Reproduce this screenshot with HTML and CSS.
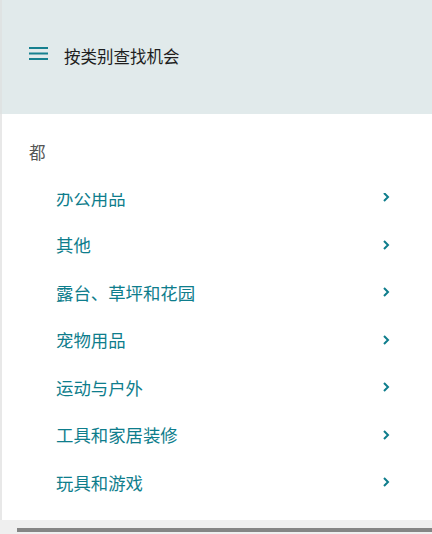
FILE: index.html
```html
<!DOCTYPE html>
<html lang="zh-CN">
<head>
<meta charset="utf-8">
<title>按类别查找机会</title>
<link rel="stylesheet" href="styles.css">
</head>
<body>
<div class="app">
  <header class="header">
    <button class="menu-btn" aria-label="菜单">
      <svg width="19" height="13" viewBox="0 0 19 13"><rect x="0" y="0" width="19" height="2" fill="#16808f"/><rect x="0" y="5.5" width="19" height="2" fill="#16808f"/><rect x="0" y="11" width="19" height="2" fill="#16808f"/></svg>
    </button>
    <h1 class="title">按类别查找机会</h1>
  </header>
  <main class="main">
    <div class="section-label">都</div>
    <div class="list-viewport">
      <ul class="list">
        <li class="item"><span>办公用品</span><svg class="chev" width="7" height="10" viewBox="0 0 7 10"><path d="M1 1 L5 5 L1 9" fill="none" stroke="#0e7d8c" stroke-width="2"/></svg></li>
        <li class="item"><span>其他</span><svg class="chev" width="7" height="10" viewBox="0 0 7 10"><path d="M1 1 L5 5 L1 9" fill="none" stroke="#0e7d8c" stroke-width="2"/></svg></li>
        <li class="item"><span>露台、草坪和花园</span><svg class="chev" width="7" height="10" viewBox="0 0 7 10"><path d="M1 1 L5 5 L1 9" fill="none" stroke="#0e7d8c" stroke-width="2"/></svg></li>
        <li class="item"><span>宠物用品</span><svg class="chev" width="7" height="10" viewBox="0 0 7 10"><path d="M1 1 L5 5 L1 9" fill="none" stroke="#0e7d8c" stroke-width="2"/></svg></li>
        <li class="item"><span>运动与户外</span><svg class="chev" width="7" height="10" viewBox="0 0 7 10"><path d="M1 1 L5 5 L1 9" fill="none" stroke="#0e7d8c" stroke-width="2"/></svg></li>
        <li class="item"><span>工具和家居装修</span><svg class="chev" width="7" height="10" viewBox="0 0 7 10"><path d="M1 1 L5 5 L1 9" fill="none" stroke="#0e7d8c" stroke-width="2"/></svg></li>
        <li class="item"><span>玩具和游戏</span><svg class="chev" width="7" height="10" viewBox="0 0 7 10"><path d="M1 1 L5 5 L1 9" fill="none" stroke="#0e7d8c" stroke-width="2"/></svg></li>
      </ul>
    </div>
  </main>
  <div class="hscroll"><div class="thumb"></div></div>
</div>
</body>
</html>
```
FILE: styles.css
```css
html, body {
  margin: 0;
  padding: 0;
}
body {
  width: 432px;
  height: 534px;
  overflow: hidden;
  background: #ffffff;
  font-family: "Noto Sans CJK SC", "Noto Sans", sans-serif;
}
.app {
  display: flex;
  flex-direction: column;
  height: 534px;
}
.header {
  height: 114px;
  box-sizing: border-box;
  background: #e1eaeb;
  border-left: 2px solid #dfe3e3;
  display: flex;
  align-items: flex-start;
  padding: 44px 0 0 27px;
  gap: 16px;
  flex: none;
}
.menu-btn {
  border: 0;
  background: none;
  padding: 0;
  margin-top: 3px;
  width: 19px;
  height: 13px;
  display: flex;
}
.title {
  margin: 0;
  font-size: 16.5px;
  font-weight: 400;
  color: #1e1e1e;
  line-height: 24px;
}
.main {
  height: 406px;
  box-sizing: border-box;
  border-left: 2px solid #e8e8e8;
  background: #ffffff;
  padding-top: 26px;
  display: flex;
  flex-direction: column;
  flex: none;
}
.section-label {
  padding-left: 27px;
  font-size: 16.5px;
  line-height: 24px;
  color: #555555;
}
.list-viewport {
  margin-top: 29px;
  flex: 1;
  overflow: hidden;
}
.list {
  list-style: none;
  margin: -19.75px 0 0 0;
  padding: 0 42px 0 54px;
}
.item {
  height: 47.5px;
  display: flex;
  align-items: center;
  justify-content: space-between;
  font-size: 17.4px;
  color: #0e7d8c;
}
.chev {
  display: block;
}
.hscroll {
  height: 14px;
  background: #efefef;
  display: flex;
  align-items: flex-end;
  padding: 0 0 2px 17px;
  box-sizing: border-box;
  flex: none;
}
.thumb {
  flex: 1;
  height: 4px;
  background: #858585;
}
```
